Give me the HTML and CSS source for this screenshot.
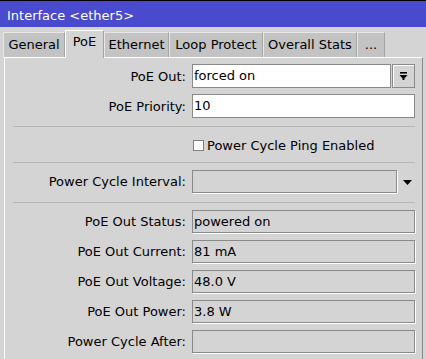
FILE: index.html
```html
<!DOCTYPE html>
<html>
<head>
<meta charset="utf-8">
<link rel="stylesheet" href="styles.css">
</head>
<body>
<div class="window">
  <div class="titlebar">Interface &lt;ether5&gt;</div>
  <div class="tabs">
    <div class="tab t-general">General</div>
    <div class="tab active t-poe">PoE</div>
    <div class="tab t-eth">Ethernet</div>
    <div class="tab t-loop">Loop Protect</div>
    <div class="tab t-stats">Overall Stats</div>
    <div class="tab t-more">...</div>
  </div>
  <div class="panel">
    <div class="row r-input first">
      <div class="lbl">PoE Out:</div>
      <div class="combo">
        <div class="field white combo-field">forced on</div>
        <div class="dropbtn">
          <svg width="9" height="9" viewBox="0 0 9 9"><rect x="1" y="0" width="7" height="1.6" fill="#000"/><polygon points="0.5,3 8.5,3 4.5,7.5" fill="#000"/><rect x="3.5" y="6.5" width="2" height="1.5" fill="#000"/></svg>
        </div>
      </div>
    </div>
    <div class="row r-input second">
      <div class="lbl">PoE Priority:</div>
      <div class="field white">10</div>
    </div>
    <div class="sep s1"></div>
    <div class="row r-check">
      <div></div>
      <div class="check"><span class="box"></span><span>Power Cycle Ping Enabled</span></div>
    </div>
    <div class="sep"></div>
    <div class="row r-ro r-pci">
      <div class="lbl">Power Cycle Interval:</div>
      <div class="pci">
        <div class="field ro pci-field"></div>
        <svg class="arrow" width="9" height="5" viewBox="0 0 9 5"><polygon points="0,0 9,0 4.5,5" fill="#000"/></svg>
      </div>
    </div>
    <div class="sep s3"></div>
    <div class="row r-ro ro-first">
      <div class="lbl">PoE Out Status:</div>
      <div class="field ro">powered on</div>
    </div>
    <div class="row r-ro">
      <div class="lbl">PoE Out Current:</div>
      <div class="field ro">81 mA</div>
    </div>
    <div class="row r-ro">
      <div class="lbl">PoE Out Voltage:</div>
      <div class="field ro">48.0 V</div>
    </div>
    <div class="row r-ro">
      <div class="lbl">PoE Out Power:</div>
      <div class="field ro">3.8 W</div>
    </div>
    <div class="row r-ro">
      <div class="lbl">Power Cycle After:</div>
      <div class="field ro"></div>
    </div>
  </div>
</div>
</body>
</html>
```

FILE: styles.css
```css
html, body {
  margin: 0;
  padding: 0;
}
body {
  width: 426px;
  height: 359px;
  overflow: hidden;
  background: #d4d4d4;
  font-family: "DejaVu Sans", Verdana, sans-serif;
  font-size: 13px;
  color: #000;
}
.window {
  display: flex;
  flex-direction: column;
  height: 359px;
}
.titlebar {
  height: 27px;
  box-sizing: border-box;
  border-top: 1px solid #000;
  background: #4a4ace;
  color: #fff;
  padding: 7px 0 0 7px;
  line-height: 16px;
}
.tabs {
  display: flex;
  align-items: flex-end;
  height: 30px;
  padding-left: 3px;
}
.tab {
  box-sizing: border-box;
  height: 25px;
  background: #c3c3c3;
  border-top: 1px solid #e8e8e8;
  border-left: 1px solid #e8e8e8;
  border-right: 1px solid #a4a4a4;
  line-height: 23px;
  text-align: center;
  white-space: nowrap;
}
.tab.active {
  height: 28px;
  margin-bottom: -1px;
  position: relative;
  z-index: 1;
  background: #d4d4d4;
  border-top-color: #fff;
  border-left-color: #fff;
  padding-top: 3px;
  line-height: 16px;
}
.t-general { width: 62px; }
.t-poe { width: 39px; }
.t-eth { width: 65px; }
.t-loop { width: 94px; }
.t-stats { width: 94px; }
.t-more { width: 28px; }
.panel {
  flex: 1;
  margin: 0 3px 0 4px;
  border-top: 1px solid #fff;
  border-left: 1px solid #fff;
  border-right: 1px solid #8a8a8a;
  padding: 6px 7px 0 0;
  display: flex;
  flex-direction: column;
}
.row {
  display: grid;
  grid-template-columns: 181px 223px;
  column-gap: 6px;
  align-items: center;
}
.lbl {
  text-align: right;
  white-space: nowrap;
}
.r-input { height: 24px; }
.second { margin-top: 6px; }
.field {
  box-sizing: border-box;
  border: 1px solid #8a8a8a;
  padding-left: 1px;
  white-space: nowrap;
  overflow: hidden;
}
.field.white {
  background: #fff;
  height: 24px;
  line-height: 22px;
}
.field.ro {
  background: #d4d4d4;
  height: 23px;
  line-height: 21px;
  box-shadow: 1px 1px 0 #fff;
}
.combo {
  display: flex;
  gap: 1px;
}
.combo-field { width: 199px; }
.dropbtn {
  box-sizing: border-box;
  width: 23px;
  height: 24px;
  border: 1px solid #8a8a8a;
  background: #d4d4d4;
  box-shadow: inset 1px 1px 0 #fff;
  display: flex;
  align-items: center;
  justify-content: center;
}
.sep {
  height: 1px;
  background: #b6b6b6;
  margin-left: 8px;
}
.s1 { margin-top: 8px; }
.r-check { height: 35px; }
.check {
  display: flex;
  align-items: center;
  gap: 3px;
  padding-left: 1px;
  padding-top: 1px;
}
.box {
  box-sizing: border-box;
  width: 11px;
  height: 11px;
  background: #fff;
  border: 1px solid #808080;
}
.r-ro {
  height: 23px;
  margin-top: 7px;
}
.r-pci { margin-top: 7px; }
.s3 { margin-top: 9px; }
.pci {
  display: flex;
  align-items: center;
}
.pci-field { width: 205px; }
.arrow {
  margin-left: 6px;
  margin-top: 2px;
}
```
